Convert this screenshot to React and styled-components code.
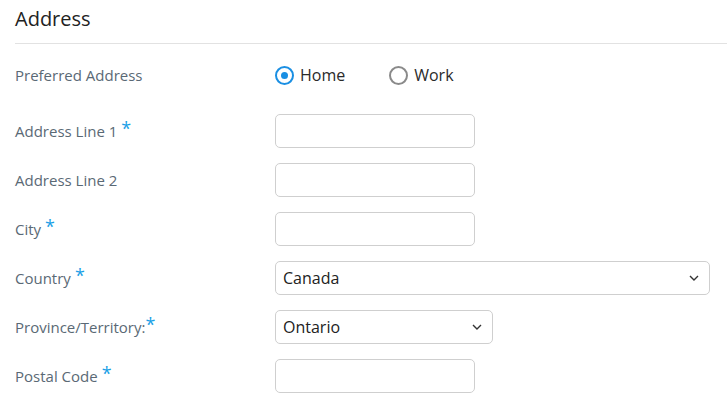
import React from "react";
import styled, { createGlobalStyle } from "styled-components";

const Global = createGlobalStyle`
  html, body { margin: 0; padding: 0; background: #fff; }
  body { font-family: "Open Sans", "Liberation Sans", sans-serif; }
  * { box-sizing: border-box; }
`;

const Page = styled.div`
  padding: 0 0 0 15px;
  width: 727px;
`;

const Header = styled.div`
  height: 44px;
  border-bottom: 1px solid #e2e2e2;
  display: flex;
  align-items: flex-start;
`;

const Title = styled.h2`
  margin: 5px 0 0 0;
  font-size: 20px;
  font-weight: 400;
  line-height: 28px;
  color: #222;
`;

const Form = styled.div`
  display: grid;
  grid-template-columns: 260px 1fr;
  row-gap: 15px;
  padding-top: 14px;
`;

const Label = styled.div`
  display: flex;
  align-items: center;
  height: 34px;
  font-size: 15px;
  color: #5a6975;
  margin-top: ${(p) => p.$top || 0}px;
`;

const Star = styled.span`
  color: #1aa0e6;
  font-size: 18px;
  line-height: 1;
  margin-left: ${(p) => (p.$tight ? 0 : 4)}px;
  align-self: flex-start;
  margin-top: 5px;
`;

const Field = styled.div`
  display: flex;
  align-items: center;
  height: 34px;
  margin-top: ${(p) => p.$top || 0}px;
`;

const RadioGroup = styled.div`
  display: flex;
  align-items: center;
  gap: 44px;
`;

const RadioOption = styled.label`
  display: flex;
  align-items: center;
  gap: 6px;
  font-size: 16px;
  color: #2a2a2a;
`;

const RadioCircle = styled.span`
  width: 19px;
  height: 19px;
  border-radius: 50%;
  border: 2px solid ${(p) => (p.$checked ? "#1a8fe3" : "#8a8a8a")};
  display: flex;
  align-items: center;
  justify-content: center;
  &::after {
    content: "";
    width: 7px;
    height: 7px;
    border-radius: 50%;
    background: ${(p) => (p.$checked ? "#1a8fe3" : "transparent")};
  }
`;

const TextBox = styled.div`
  width: 200px;
  height: 34px;
  border: 1px solid #cfcfcf;
  border-radius: 5px;
  background: #fff;
`;

const SelectBox = styled.div`
  width: ${(p) => p.$w}px;
  height: 34px;
  border: 1px solid #cfcfcf;
  border-radius: 5px;
  background: #fff;
  display: flex;
  align-items: center;
  justify-content: space-between;
  padding: 0 10px 0 7px;
  font-size: 16px;
  color: #222;
`;

const Chevron = () => (
  <svg width="10" height="6" viewBox="0 0 10 6">
    <path d="M1 1 L5 5 L9 1" fill="none" stroke="#333" strokeWidth="1.4" />
  </svg>
);

const Req = ({ tight }) => <Star $tight={tight}>*</Star>;

export default function App() {
  return (
    <>
      <Global />
      <Page>
        <Header>
          <Title>Address</Title>
        </Header>
        <Form>
          <Label>Preferred Address</Label>
          <Field>
            <RadioGroup>
              <RadioOption>
                <RadioCircle $checked />
                Home
              </RadioOption>
              <RadioOption>
                <RadioCircle />
                Work
              </RadioOption>
            </RadioGroup>
          </Field>

          <Label $top={7}>
            Address Line 1<Req />
          </Label>
          <Field $top={7}>
            <TextBox />
          </Field>

          <Label>Address Line 2</Label>
          <Field>
            <TextBox />
          </Field>

          <Label>
            City<Req />
          </Label>
          <Field>
            <TextBox />
          </Field>

          <Label>
            Country<Req />
          </Label>
          <Field>
            <SelectBox $w={435}>
              Canada
              <Chevron />
            </SelectBox>
          </Field>

          <Label>
            Province/Territory:<Req tight />
          </Label>
          <Field>
            <SelectBox $w={218}>
              Ontario
              <Chevron />
            </SelectBox>
          </Field>

          <Label>
            Postal Code<Req />
          </Label>
          <Field>
            <TextBox />
          </Field>
        </Form>
      </Page>
    </>
  );
}
